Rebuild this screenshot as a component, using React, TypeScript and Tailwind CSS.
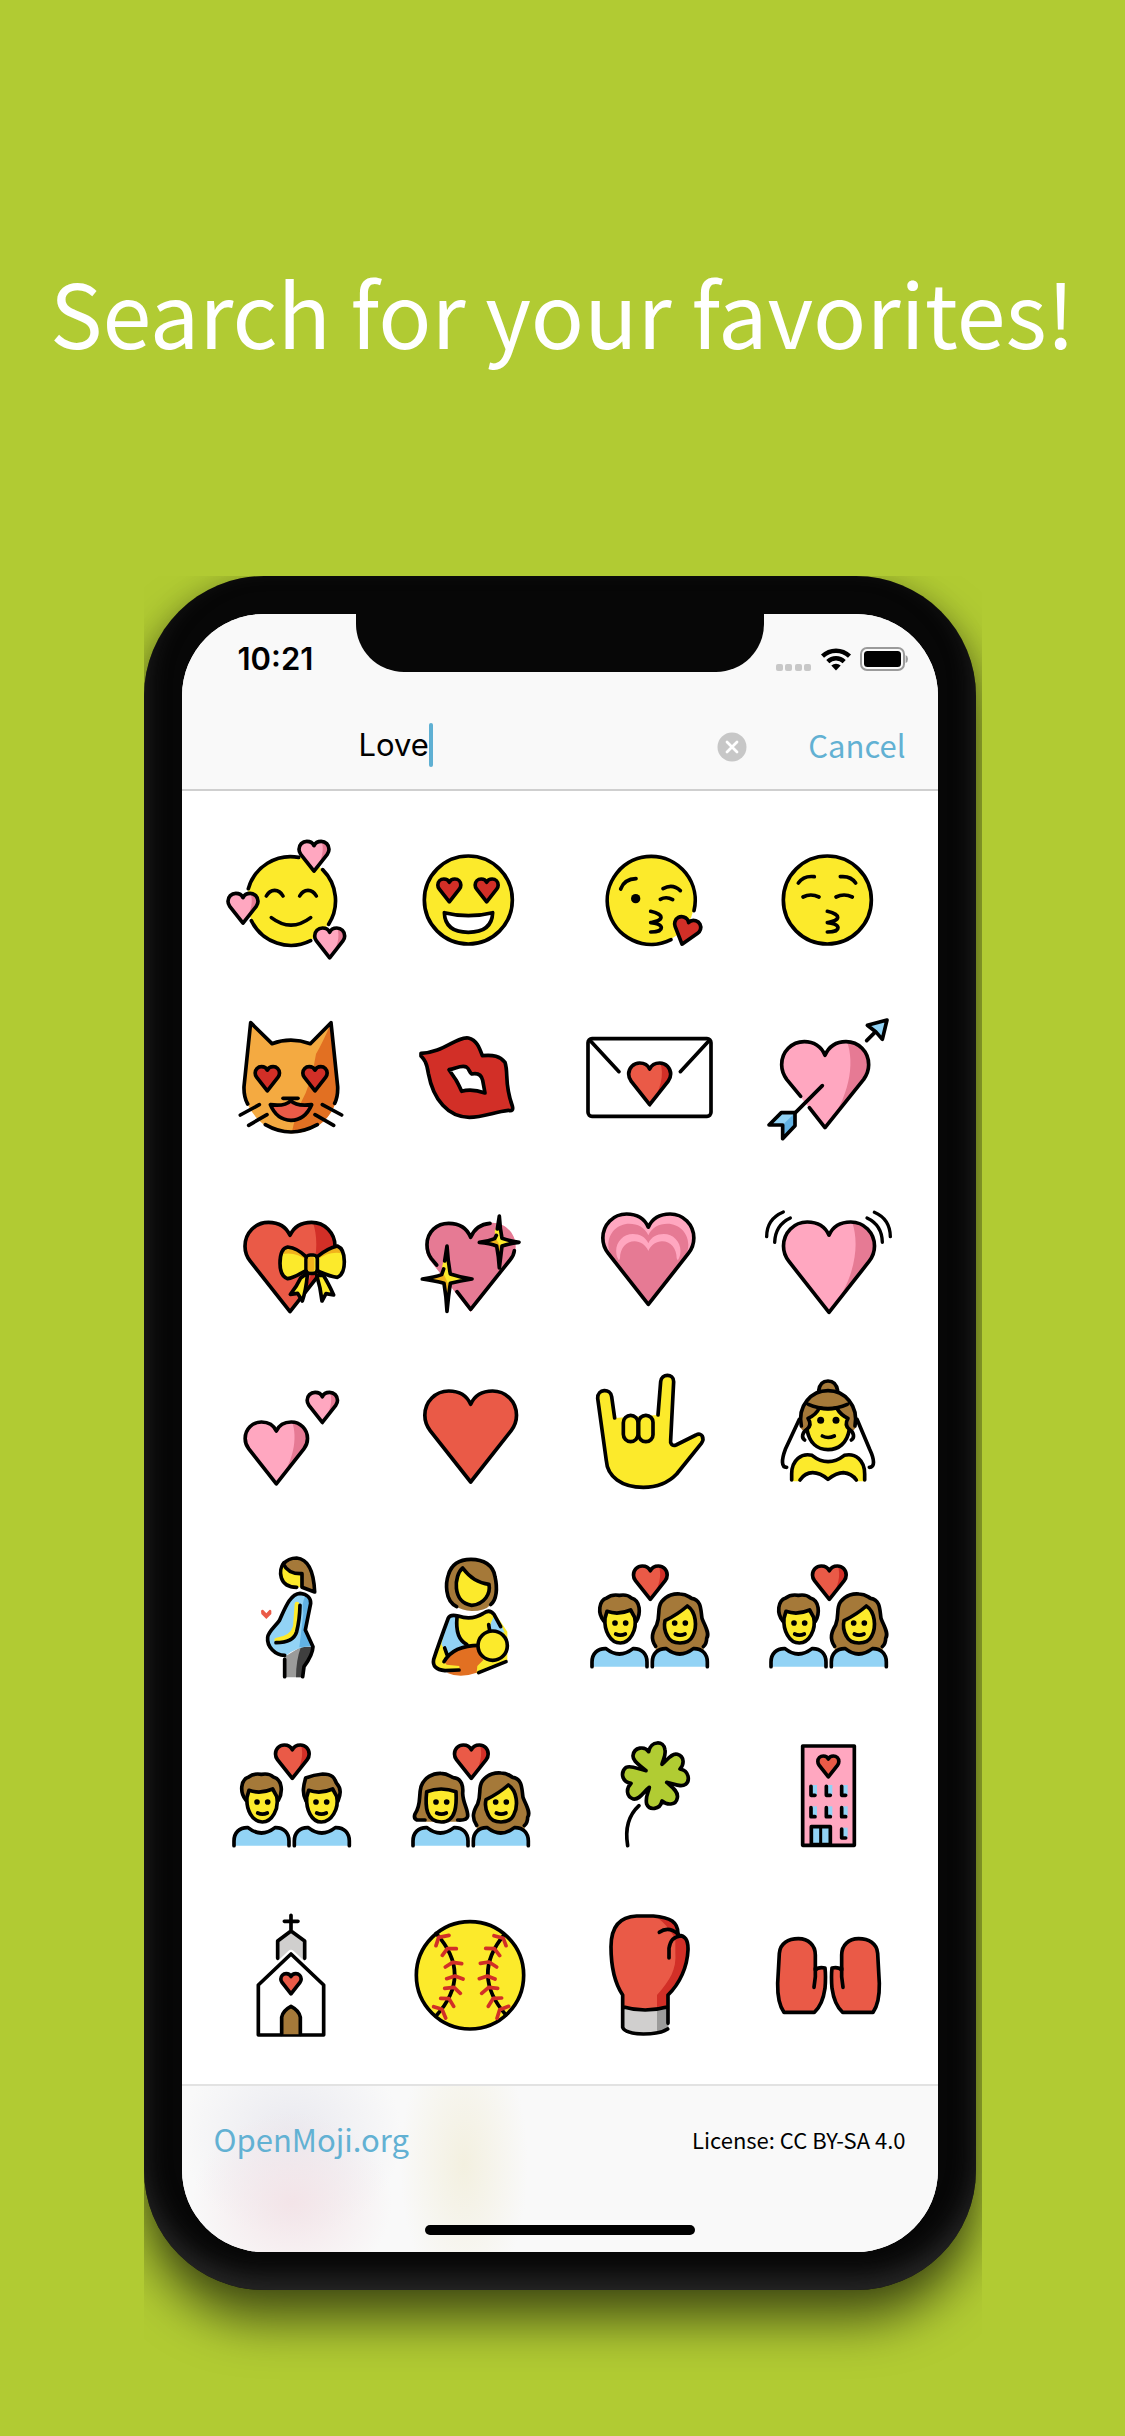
import React, { useState } from "react";

const YELLOW = "#FCEA2B";
const AMBER = "#F1B31C";
const PINK = "#FFA7C0";
const ROSE = "#E67A94";
const RED = "#EA5A47";
const CRIMSON = "#D22F27";
const BROWN = "#A57939";
const SKY = "#92D3F5";
const BLUE = "#61B2E4";
const LIGHT_GREY = "#D0CFCE";
const GREY = "#9B9B9A";
const DARK_GREY = "#3F3F3F";

const LINE = 11;

type HeartProps = {
  cx: number;
  top: number;
  w: number;
  fill: string;
  shade?: string;
  outline?: boolean;
  rotate?: number;
};

/* Heart drawn from its top centre; w is the distance between both outer lobes. */
function Heart({ cx, top, w, fill, shade, outline = true, rotate = 0 }: HeartProps) {
  const s = w / 276;
  return (
    <g transform={`translate(${cx} ${top}) scale(${s}) rotate(${rotate} 0 274)`}>
      <path
        d="M0 40C-12 13-37 0-66 0C-106 0-138 32-138 73C-138 93-132 106-122 119L0 274L122 119C132 106 138 93 138 73C138 32 106 0 66 0C37 0 12 13 0 40Z"
        fill={fill}
        stroke="none"
      />
      {shade && (
        <path
          d="M70 0C95 70 78 180 0 274L122 119C132 106 138 93 138 73C138 32 106 0 70 0Z"
          fill={shade}
          stroke="none"
        />
      )}
      {outline && (
        <path
          d="M0 40C-12 13-37 0-66 0C-106 0-138 32-138 73C-138 93-132 106-122 119L0 274L122 119C132 106 138 93 138 73C138 32 106 0 66 0C37 0 12 13 0 40Z"
          strokeWidth={LINE / s}
        />
      )}
    </g>
  );
}

function SmilingHearts() {
  return (
    <>
      <circle cx="273" cy="272" r="132" fill={YELLOW} stroke="none" />
      <path d="M296 142A132 132 0 0 0 145 236M154 332A132 132 0 0 0 332 392M368 179A132 132 0 0 1 386 343" />
      <path d="M199 258Q208 241 224 241Q240 241 249 258M299 258Q308 241 324 241Q340 241 349 258M214 323Q273 368 332 323" />
      <Heart cx={342} top={94} w={90} fill={PINK} shade={ROSE} />
      <Heart cx={129} top={250} w={90} fill={PINK} shade={ROSE} />
      <Heart cx={389} top={354} w={90} fill={PINK} shade={ROSE} />
    </>
  );
}

function HeartEyes() {
  return (
    <>
      <circle cx="805" cy="270" r="132" fill={YELLOW} />
      <Heart cx={748} top={207} w={69} fill={CRIMSON} />
      <Heart cx={860} top={207} w={69} fill={CRIMSON} />
      <path d="M733 308Q805 326 878 308Q876 367 805 367Q735 367 733 308Z" fill="#fff" />
    </>
  );
}

const KISS_MOUTH = "M272 304C290 308 303 315 303 322C303 332 286 335 272 338C286 339 304 344 304 353C304 362 288 366 272 366";

function KissHeart() {
  return (
    <>
      <circle cx="272" cy="270" r="132" fill={YELLOW} stroke="none" />
      <path d="M402 302A132 132 0 1 0 333 389" />
      <path d="M182 237Q193 207 228 206M309 236Q338 220 361 242M301 268Q319 258 338 269" />
      <circle cx="227" cy="266" r="14" fill="#000" stroke="none" />
      <path d={KISS_MOUTH} />
      <Heart cx={366} top={323} w={80} fill={CRIMSON} rotate={17} />
    </>
  );
}

function KissClosed() {
  return (
    <>
      <circle cx="802" cy="270" r="132" fill={YELLOW} />
      <path d="M715 219Q731 196 763 200M841 200Q873 197 887 219M729 261Q752 249 777 261M828 261Q852 249 877 261" />
      <path d={KISS_MOUTH} transform="translate(530 0)" />
    </>
  );
}

function Cat() {
  return (
    <>
      <path d="M152 638L216 701Q272 680 331 701L393 638L413 830Q414 900 360 943Q320 970 275 970Q230 970 190 943Q132 895 132 830Z" fill="#F4AA41" stroke="none" />
      <path d="M393 638Q372 690 348 732Q335 820 302 880Q285 920 275 970Q320 970 360 943Q414 900 413 830Z" fill="#E27022" stroke="none" />
      <path d="M143 882Q131 860 132 830L152 638L216 701Q272 680 331 701L393 638L413 830Q414 860 404 880M196 944Q272 988 352 944" />
      <Heart cx={202} top={770} w={73} fill={CRIMSON} />
      <Heart cx={345} top={770} w={73} fill={CRIMSON} />
      <path d="M211 884Q255 890 272 872Q290 890 335 884Q315 930 273 931Q230 930 211 884Z" fill={RED} />
      <path d="M249 865H294" />
      <path d="M178 884L121 915M201 914L146 946M367 884L425 915M345 914L401 946" />
    </>
  );
}

function Lips() {
  return (
    <>
      <path d="M663 730C730 728 768 680 805 684C830 690 838 712 847 737C880 734 900 738 915 757C926 790 912 820 937 888Q942 905 925 901C885 905 850 922 808 922C745 922 700 870 685 790C680 755 672 748 663 738Z" fill={CRIMSON} />
      <path d="M747 779C768 775 785 764 799 771C808 776 808 788 815 792C835 788 845 797 848 811L855 849C835 842 805 838 785 844Q775 822 768 810Z" fill="#fff" />
    </>
  );
}

function LoveLetter() {
  return (
    <>
      <rect x="84" y="686" width="369" height="233" rx="12" fill="#fff" />
      <path d="M91 692L177 785M447 692L361 785" />
      <Heart cx={269} top={759} w={126} fill={RED} shade={CRIMSON} />
    </>
  );
}

function ArrowHeart() {
  return (
    <>
      <Heart cx={795} top={695} w={261} fill={PINK} shade={ROSE} outline={false} />
      <path d="M748 893L795 953L911 808C920 795 926 783 926 764C926 725 896 695 858 695C830 695 807 709 795 736C784 709 760 695 733 695C695 695 665 725 665 764C665 783 671 795 680 808L722 859" />
      <path d="M787 827L707 907M920 692L947 665" />
      <path d="M627 945L664 908H705V947L668 986V945Z" fill={SKY} stroke="none" />
      <path d="M668 945L705 908V947L668 986Z" fill={BLUE} stroke="none" />
      <path d="M627 945L664 908H705V947L668 986V945Z" />
      <path d="M922 646L981 630L967 688L947 665Z" fill={SKY} />
    </>
  );
}

function RibbonHeart() {
  return (
    <>
      <Heart cx={270} top={127} w={270} fill={RED} shade={CRIMSON} />
      <path d="M318 282L302 294Q290 320 271 343L293 340L307 363Q318 330 322 286Z" fill={YELLOW} />
      <path d="M350 286Q362 325 366 363L378 341L401 345Q385 310 370 286Z" fill={YELLOW} />
      <path d="M318 230C300 212 280 203 263 201C242 205 240 235 240 250C240 270 245 290 263 296C285 293 300 280 318 272Z" fill={YELLOW} stroke="none" />
      <path d="M352 230C370 215 390 203 412 198C430 205 433 225 433 245C433 270 428 285 412 292C390 290 370 280 352 272Z" fill={YELLOW} stroke="none" />
      <path d="M318 240Q290 215 246 222L263 201Q290 205 318 230ZM352 240Q385 212 428 220L412 198Q380 208 352 230Z" fill={AMBER} stroke="none" />
      <path d="M318 230C300 212 280 203 263 201C242 205 240 235 240 250C240 270 245 290 263 296C285 293 300 280 318 272M352 230C370 215 390 203 412 198C430 205 433 225 433 245C433 270 428 285 412 292C390 290 370 280 352 272" />
      <rect x="318" y="225" width="34" height="55" rx="12" fill={YELLOW} />
      <rect x="323" y="231" width="20" height="43" rx="6" fill={AMBER} stroke="none" />
    </>
  );
}

function SparkleHeart() {
  return (
    <>
      <Heart cx={812} top={128} w={270} fill={ROSE} outline={false} />
      <path d="M710 255L694 236Q681 218 681 194C681 155 711 130 746 130C775 130 800 142 812 172C822 148 843 132 870 130M943 212Q942 226 930 240L812 388L771 335" />
      <path d="M741 198Q744 245 751 282Q780 292 816 297Q780 302 751 310Q745 350 741 394Q739 350 732 310Q705 302 667 297Q705 292 731 282L726 262Z" fill={YELLOW} stroke="none" />
      <path d="M741 394Q739 350 732 310Q705 302 667 297Q705 292 731 282Q740 300 747 320Z" fill={AMBER} stroke="none" />
      <path d="M734 243L741 198Q744 245 751 282Q780 292 816 297Q780 302 751 310Q745 350 741 394Q739 350 732 310Q705 302 667 297Q705 292 725 284L731 267" />
      <path d="M898 108Q900 145 906 175Q930 183 957 187Q930 190 906 198Q902 230 898 264Q896 230 890 198Q870 190 838 187Q865 184 889 176L884 155Z" fill={YELLOW} stroke="none" />
      <path d="M898 238Q896 215 890 198Q870 190 856 187Q875 184 889 178Q896 190 903 205Z" fill={AMBER} stroke="none" />
      <path d="M892 147L898 108Q900 145 906 175Q930 183 957 187Q930 190 906 198Q902 230 898 264Q896 230 890 198Q870 190 838 187Q865 184 884 176L889 166" />
    </>
  );
}

function GrowingHeart() {
  return (
    <>
      <Heart cx={265} top={102} w={272} fill={PINK} outline={false} />
      <Heart cx={265} top={131} w={240} fill={ROSE} outline={false} />
      <Heart cx={265} top={162} w={193} fill={PINK} outline={false} />
      <path d="M265 213C258 195 240 184 224 184C198 184 180 205 180 235L170 254L265 372L360 254L350 235C350 205 332 184 306 184C290 184 272 195 265 213Z" fill={ROSE} stroke="none" />
      <Heart cx={265} top={102} w={273} fill="none" />
    </>
  );
}

function BeatingHeart() {
  return (
    <>
      <Heart cx={807} top={126} w={273} fill={PINK} shade={ROSE} />
      <path d="M670 96Q620 117 620 170M691 114Q646 135 644 187M943 97Q990 117 991 170M921 114Q966 135 967 187" strokeWidth="10" />
    </>
  );
}

function TwoHearts() {
  return (
    <>
      <Heart cx={229} top={726} w={187} fill={PINK} shade={ROSE} />
      <Heart cx={367} top={637} w={91} fill={PINK} shade={ROSE} />
    </>
  );
}

function RedHeart() {
  return <Heart cx={812} top={633} w={275} fill={RED} />;
}

function LoveYouHand() {
  return (
    <>
      <path d="M164 714L155 650C152 625 112 625 113 655L139 842C142 890 185 922 250 922C290 922 325 908 350 882L424 790C435 775 425 755 408 765L348 795C336 800 330 790 332 780L341 605C341 580 304 580 302 605L294 705" fill={YELLOW} />
      <rect x="190" y="706" width="44" height="79" rx="22" fill={YELLOW} />
      <rect x="236" y="706" width="43" height="79" rx="21" fill={YELLOW} />
    </>
  );
}

function Bride() {
  return (
    <>
      <path d="M776 632Q780 603 804 603Q828 603 833 632" fill={BROWN} />
      <path d="M804 632C753 632 718 668 720 742Q735 765 745 740H862Q874 765 888 742C890 668 855 632 804 632Z" fill={BROWN} stroke="none" />
      <path d="M744 715Q768 705 778 684Q804 690 830 684Q842 705 864 715Q852 735 868 748C862 790 835 809 804 809C773 809 748 790 741 748Q757 735 744 715Z" fill={YELLOW} />
      <path d="M724 738C712 675 755 632 804 632C853 632 896 675 885 738M745 673Q804 698 862 673" />
      <path d="M741 748C726 757 724 774 734 780M868 748C883 757 884 774 874 780" />
      <path d="M718 718L676 808C664 840 664 862 680 862M891 718L929 808C944 840 945 862 928 862" />
      <path d="M695 904V882C695 840 725 818 756 826Q804 862 853 826C885 818 914 840 914 882V904H890Q870 878 850 878Q830 878 804 898Q780 878 758 878Q735 878 719 904Z" fill={YELLOW} stroke="none" />
      <path d="M695 900V882C695 840 725 818 756 826Q804 864 853 826C885 818 914 840 914 882V900M720 900Q735 878 758 878Q780 878 804 898Q830 878 850 878Q875 880 889 900" />
      <circle cx="782" cy="721" r="10.5" fill="#000" stroke="none" />
      <circle cx="828" cy="721" r="10.5" fill="#000" stroke="none" />
      <path d="M787 768Q804 777 823 768" />
    </>
  );
}

function Pregnant() {
  return (
    <>
      <path d="M250 100C236 120 236 172 290 172H306V131Q265 133 250 100Z" fill={YELLOW} stroke="none" />
      <path d="M250 102Q265 84 290 84C332 88 342 140 344 186L306 172V131Q265 133 250 102Z" fill={BROWN} />
      <path d="M252 98C234 120 236 172 290 172" />
      <path d="M254 380L303 350H339Q332 380 310 412V442H254Z" fill={GREY} stroke="none" />
      <path d="M303 350H339Q332 380 310 412V442H288Q288 390 303 350Z" fill={DARK_GREY} stroke="none" />
      <path d="M300 190C322 190 332 205 332 220L316 300L339 348Q290 350 256 378C225 375 200 350 203 322C205 305 225 290 238 272C255 235 270 195 300 190Z" fill={SKY} stroke="none" />
      <path d="M316 198Q304 220 310 250L298 352L339 348L316 300L332 220Z" fill={BLUE} stroke="none" />
      <path d="M291 222L286 290Q276 325 230 330" stroke={YELLOW} strokeWidth="14" />
      <path d="M300 226Q299 270 290 305Q280 338 228 338" />
      <path d="M254 376C225 375 200 350 203 322C205 305 225 290 238 272C255 235 270 192 300 190C322 192 333 205 332 220L316 300L339 350Q338 375 312 410L308 440M254 388V440" />
      <path d="M183 242Q188 236 192 242L199 250L206 242Q210 236 214 242V252L199 267L184 252Z" fill={RED} stroke="none" />
    </>
  );
}

function Feeding() {
  return (
    <>
      <path d="M770 230C732 212 738 155 745 135C755 100 780 88 813 88C850 88 880 105 885 140C893 175 890 210 872 224Q855 243 815 243Q785 240 770 230Z" fill={BROWN} stroke="none" />
      <path d="M770 230C732 212 738 155 745 135C755 100 780 88 813 88C850 88 880 105 885 140C893 175 890 210 872 224" />
      <path d="M788 114C762 135 755 218 815 226C855 222 872 190 867 163Q820 158 788 114Z" fill={YELLOW} />
      <path d="M772 256Q748 252 744 264L701 393Q700 422 740 424L835 430L922 393V305L885 250Q872 240 860 250Q815 275 772 256Z" fill={YELLOW} stroke="none" />
      <path d="M772 256Q748 252 744 264L724 343L740 372L800 345Q772 320 772 256Z" fill={SKY} stroke="none" />
      <path d="M882 258Q870 280 868 300L914 308Q905 285 882 258Z" fill={SKY} stroke="none" />
      <path d="M733 397Q765 343 840 350Q840 380 850 390L832 408L830 428Q780 446 740 428L778 420V408L740 404Z" fill="#E27022" stroke="none" />
      <path d="M777 420L735 422Q695 418 701 388Q715 345 745 264Q750 252 775 258Q815 272 850 250Q868 236 882 253L902 290M771 262Q765 325 800 343M732 395Q760 346 838 346M734 354L741 374M866 284L869 302M836 428L918 395" />
      <circle cx="878" cy="347" r="44" fill={YELLOW} />
    </>
  );
}

/* The people below share one frame: left person around x=180, right around x=360. */
function Shoulders({ dx = 0 }: { dx?: number }) {
  return (
    <path
      d="M96 410V396C96 371 112 355 138 356Q178 388 219 356C246 355 261 373 261 396V410"
      transform={`translate(${dx} 0)`}
      fill={SKY}
    />
  );
}

function Features({ dx = 0 }: { dx?: number }) {
  return (
    <g transform={`translate(${dx} 0)`}>
      <circle cx="165" cy="279" r="8.5" fill="#000" stroke="none" />
      <circle cx="197" cy="279" r="8.5" fill="#000" stroke="none" />
      <path d="M167 312Q181 319 196 312" />
    </g>
  );
}

function ShortHairMan() {
  return (
    <>
      <path d="M132 274C112 250 116 212 140 204Q155 192 178 196Q202 192 214 204C242 212 243 250 229 274Z" fill={BROWN} />
      <path d="M141 244Q175 256 212 240L224 262C232 300 210 339 181 339C150 339 132 300 135 265Z" fill={YELLOW} />
      <Features />
      <Shoulders />
    </>
  );
}

function SweptHairMan() {
  return (
    <>
      <path d="M312 276C298 250 306 225 311 207Q335 197 362 195C395 195 398 210 403 222C420 240 415 258 408 276Z" fill={BROWN} />
      <path d="M320 244Q355 256 392 240L404 262C412 300 388 339 358 339C328 339 312 300 314 265Z" fill={YELLOW} />
      <Features dx={177} />
      <Shoulders dx={181} />
    </>
  );
}

function BobHairWoman() {
  return (
    <>
      <path d="M132 333H108Q97 328 102 315C122 285 112 262 120 233C130 205 155 192 180 193C200 193 207 202 217 206C243 208 247 233 245 253C246 283 262 303 260 322Q257 335 230 333V338H132Z" fill={BROWN} stroke="none" />
      <path d="M132 333H108Q97 328 102 315C122 285 112 262 120 233C130 205 155 192 180 193C200 193 207 202 217 206C243 208 247 233 245 253C246 283 262 303 260 322Q257 335 230 333" />
      <path d="M137 248Q180 232 225 248C227 283 227 339 181 339C135 339 132 293 137 248Z" fill={YELLOW} />
      <Features />
      <Shoulders />
    </>
  );
}

function LongHairWoman() {
  return (
    <>
      <path d="M287 349C270 325 278 305 290 285C302 255 290 235 305 215C320 195 345 190 360 192C380 192 385 200 395 205C425 210 422 240 426 265C435 290 450 310 440 325Q440 342 430 350L432 365Q360 395 287 365Z" fill={BROWN} stroke="none" />
      <path d="M287 349C270 325 278 305 290 285C302 255 290 235 305 215C320 195 345 190 360 192C380 192 385 200 395 205C425 210 422 240 426 265C435 290 450 310 440 325Q440 342 430 350" />
      <path d="M382 228C408 245 413 290 398 318C385 346 335 346 322 318C312 300 312 285 315 272Q355 252 382 228Z" fill={YELLOW} />
      <Features dx={179} />
      <Shoulders dx={181} />
    </>
  );
}

function Couple({ left, right }: { left: React.ReactNode; right: React.ReactNode }) {
  return (
    <>
      {left}
      {right}
      <Heart cx={271} top={108} w={101} fill={RED} shade={CRIMSON} />
    </>
  );
}

function Clover() {
  return (
    <>
      <path d="M258 722C240 705 218 695 219 677C222 650 255 648 266 665C272 632 312 630 315 660C318 680 308 690 306 703C322 690 335 668 352 673C375 680 372 705 360 717C388 722 390 752 377 763C362 773 345 762 320 757C335 770 356 785 352 803C348 828 320 825 306 813C300 840 268 842 260 822C255 800 265 790 268 772C250 785 240 810 220 807C198 800 198 775 213 760C183 755 182 725 198 712C215 705 235 718 258 722Z" fill="#B1CC33" />
      <path d="M237 827Q190 870 203 947" />
    </>
  );
}

const HOTEL_WINDOWS = [
  [753, 769], [799, 769], [845, 769],
  [753, 833], [799, 833], [845, 833],
  [845, 897],
];

function Hotel() {
  return (
    <>
      <rect x="728" y="648" width="155" height="298" fill={PINK} />
      <Heart cx={805} top={678} w={63} fill={RED} />
      {HOTEL_WINDOWS.map(([x, y]) => (
        <g key={`${x}-${y}`}>
          <rect x={x + 2} y={y - 4} width="16" height="30" fill={SKY} stroke="none" />
          <path d={`M${x} ${y}v27h12`} />
        </g>
      ))}
      <path d="M754 944V890H811V944Z" fill={SKY} />
      <path d="M782 892V942" strokeWidth="9" />
    </>
  );
}

function Church() {
  return (
    <>
      <path d="M233 248V183L273 153L314 183V248Z" fill={LIGHT_GREY} stroke="none" />
      <path d="M175 315L273 222L371 315V465H175Z" fill="#fff" stroke="#fff" strokeWidth="24" />
      <path d="M233 235V183L273 153L314 183V235M273 106V150M253 124H294" />
      <path d="M175 315L273 222L371 315V465H175Z" />
      <Heart cx={273} top={281} w={61} fill={RED} />
      <path d="M245 463V412Q248 392 273 379Q298 392 301 412V463" fill={BROWN} />
    </>
  );
}

function Softball() {
  return (
    <>
      <circle cx="810" cy="286" r="161" fill={YELLOW} />
      <path d="M708 160Q820 285 708 408M912 165Q812 285 918 405" />
      <path
        stroke={CRIMSON}
        d="M708 197L716 172L747 166M727 226L742 206L769 206M736 261L758 247L785 251M740 296L765 288L789 297M734 325L762 322L781 340M722 355L747 356L761 379M701 380L726 388L737 414M882 167L910 175L918 197M857 205L883 206L899 227M841 250L867 246L890 261M838 296L862 288L885 297M845 340L866 322L893 325M865 379L880 355L905 354M891 415L899 389L926 379"
      />
    </>
  );
}

function BoxingGlove() {
  return (
    <>
      <path d="M188 345C165 310 153 265 153 200C153 140 180 110 230 108H280C330 112 356 125 354 160C375 165 385 180 384 210C382 260 360 310 325 345V382Q255 402 188 382Z" fill={RED} stroke="none" />
      <path d="M284 108C330 112 356 125 354 160C375 165 385 180 384 210C382 260 360 310 325 345V384L291 391V345C330 300 350 270 346 215V175L330 152Q312 125 284 108Z" fill={CRIMSON} stroke="none" />
      <path d="M188 380Q255 402 325 382V447Q250 478 188 442Z" fill={LIGHT_GREY} stroke="none" />
      <path d="M291 391L325 382V447L291 460Z" fill={GREY} stroke="none" />
      <path d="M324 430V345C360 310 382 260 384 210C385 180 375 165 354 166C356 125 330 112 280 108H230C180 110 153 140 153 200C153 265 165 310 188 345V442Q195 460 250 462Q300 462 323 447M188 380Q255 400 324 380" />
      <path d="M298 157Q325 137 354 162M327 234V205Q332 170 362 168" />
    </>
  );
}

function Mitten() {
  return (
    <>
      <path d="M672 397Q652 370 653 310L658 220C660 190 685 176 715 176C745 176 766 195 766 225V270Q775 260 795 264Q798 290 795 325Q788 375 763 397Z" fill={RED} />
      <path d="M766 265V290L762 322" />
    </>
  );
}

function Mittens() {
  return (
    <>
      <Mitten />
      <g transform="translate(1611 0) scale(-1 1)">
        <Mitten />
      </g>
    </>
  );
}

type Emoji = { name: string; x: number; y: number; art: React.ReactNode };

const EMOJIS: Emoji[] = [
  { name: "Smiling face with hearts", x: 6, y: 3, art: <SmilingHearts /> },
  { name: "Smiling face with heart-eyes", x: 543, y: 3, art: <HeartEyes /> },
  { name: "Face blowing a kiss", x: 0, y: 3, art: <KissHeart /> },
  { name: "Kissing face with closed eyes", x: 537, y: 3, art: <KissClosed /> },
  { name: "Smiling cat with heart-eyes", x: 6, y: 540, art: <Cat /> },
  { name: "Kiss mark", x: 543, y: 540, art: <Lips /> },
  { name: "Love letter", x: 0, y: 540, art: <LoveLetter /> },
  { name: "Heart with arrow", x: 537, y: 540, art: <ArrowHeart /> },
  { name: "Heart with ribbon", x: 6, y: -33, art: <RibbonHeart /> },
  { name: "Sparkling heart", x: 543, y: -33, art: <SparkleHeart /> },
  { name: "Growing heart", x: 0, y: -33, art: <GrowingHeart /> },
  { name: "Beating heart", x: 537, y: -33, art: <BeatingHeart /> },
  { name: "Two hearts", x: 6, y: 504, art: <TwoHearts /> },
  { name: "Red heart", x: 543, y: 504, art: <RedHeart /> },
  { name: "Love-you gesture", x: 0, y: 504, art: <LoveYouHand /> },
  { name: "Bride with veil", x: 537, y: 504, art: <Bride /> },
  { name: "Pregnant woman", x: 6, y: -9, art: <Pregnant /> },
  { name: "Breast-feeding", x: 543, y: -9, art: <Feeding /> },
  { name: "Couple with heart", x: 0, y: -9, art: <Couple left={<ShortHairMan />} right={<LongHairWoman />} /> },
  { name: "Couple with heart: woman, man", x: 0, y: -9, art: <Couple left={<ShortHairMan />} right={<LongHairWoman />} /> },
  { name: "Couple with heart: man, man", x: 0, y: -9, art: <Couple left={<ShortHairMan />} right={<SweptHairMan />} /> },
  { name: "Couple with heart: woman, woman", x: 0, y: -9, art: <Couple left={<BobHairWoman />} right={<LongHairWoman />} /> },
  { name: "Four leaf clover", x: 0, y: 528, art: <Clover /> },
  { name: "Love hotel", x: 537, y: 528, art: <Hotel /> },
  { name: "Wedding chapel", x: 6, y: 15, art: <Church /> },
  { name: "Softball", x: 543, y: 15, art: <Softball /> },
  { name: "Boxing glove", x: 0, y: 15, art: <BoxingGlove /> },
  { name: "Gloves", x: 537, y: 15, art: <Mittens /> },
];

function StatusBar() {
  return (
    <div className="flex h-[90px] items-center justify-between pl-14 pr-[30px]">
      <span className="font-['Inter',sans-serif] text-[31px] font-semibold leading-9 text-black">10:21</span>
      <div className="flex items-center gap-2">
        <svg className="mt-4 h-2 w-9" viewBox="0 0 36 8" fill="#c8c8c8" aria-hidden="true">
          <rect x="0" y="1" width="7" height="7" rx="2" />
          <rect x="9" y="1" width="7" height="7" rx="2" />
          <rect x="19" y="1" width="7" height="7" rx="2" />
          <rect x="28" y="1" width="7" height="7" rx="2" />
        </svg>
        <svg className="h-6 w-8" viewBox="0 0 32 24" fill="none" stroke="#000" strokeWidth="4.4" aria-hidden="true">
          <path d="M2.5 9.2A19.5 19.5 0 0 1 29.5 9.2" />
          <path d="M7.8 14.6A11.8 11.8 0 0 1 24.2 14.6" />
          <path d="M16 23.4L11.3 18.6A7 7 0 0 1 20.7 18.6Z" fill="#000" stroke="none" />
        </svg>
        <svg className="h-6 w-12" viewBox="0 0 48 24" aria-hidden="true">
          <rect x="1" y="1" width="43" height="22" rx="6" fill="none" stroke="#9b9b9b" strokeWidth="2" />
          <rect x="4" y="4" width="37" height="16" rx="3.5" fill="#000" />
          <path d="M45.6 8Q48 9 48 12Q48 15 45.6 16Z" fill="#9b9b9b" />
        </svg>
      </div>
    </div>
  );
}

function SearchBar() {
  const [query, setQuery] = useState("Love");
  return (
    <form className="flex h-[85px] items-center pl-[177px] pr-8" role="search" onSubmit={(e) => e.preventDefault()}>
      <div className="flex flex-1 items-center pb-1">
        <input
          aria-label="Search emojis"
          value={query}
          onChange={(e) => setQuery(e.target.value)}
          className="field-sizing-content min-w-0 bg-transparent p-0 font-['Inter',sans-serif] text-[31px] leading-10 text-black outline-none"
        />
        <span className="h-11 w-1 shrink-0 rounded-full bg-[#5fb0d3]" aria-hidden="true" />
      </div>
      <button type="button" aria-label="Clear search" onClick={() => setQuery("")} className="shrink-0">
        <svg className="size-[30px]" viewBox="0 0 30 30" aria-hidden="true">
          <circle cx="15" cy="15" r="14.5" fill="#c7c7c7" />
          <path d="M10 10L20 20M20 10L10 20" stroke="#fff" strokeWidth="2.8" strokeLinecap="round" />
        </svg>
      </button>
      <button type="button" className="ml-[61px] shrink-0 pb-1 text-[31px] leading-10 text-[#62b1d3]">
        Cancel
      </button>
    </form>
  );
}

export default function App() {
  return (
    <main className="min-h-screen overflow-hidden bg-[#b1cb33] pb-10 font-['Noto_Sans_CJK_SC','Noto_Sans',sans-serif]">
      <h1 className="pt-[239px] text-center text-[88px] leading-[144px] text-white">Search for your favorites!</h1>

      <div className="mx-auto mt-[193px] w-[838px] max-w-full overflow-hidden pb-[106px] pr-[6px]">
        <div className="rounded-[120px] bg-[#070707] p-[38px] shadow-[0_30px_50px_rgba(0,0,0,0.6),0_0_24px_rgba(0,0,0,0.15),inset_0_-14px_24px_#262626]">
          <section className="relative overflow-hidden rounded-[82px] bg-white">
            <div className="absolute left-1/2 top-0 h-[58px] w-[408px] -translate-x-1/2 rounded-b-[48px] bg-[#070707]" />

            <header className="border-b-2 border-[#cfcfcf] bg-[#f9f9f9]">
              <StatusBar />
              <SearchBar />
            </header>

            <ul className="grid grid-cols-4 p-5">
              {EMOJIS.map((emoji) => (
                <li key={emoji.name}>
                  <button type="button" aria-label={emoji.name} className="block aspect-square w-full">
                    <svg
                      className="size-full"
                      viewBox={`${emoji.x} ${emoji.y} 537 537`}
                      fill="none"
                      stroke="#000"
                      strokeWidth={LINE}
                      strokeLinecap="round"
                      strokeLinejoin="round"
                      aria-hidden="true"
                    >
                      {emoji.art}
                    </svg>
                  </button>
                </li>
              ))}
            </ul>

            <footer className="border-t-2 border-[#e2e2e2] bg-[#f9f9f9] bg-[radial-gradient(ellipse_100px_90px_at_110px_116px,#f3e4e8,transparent),radial-gradient(ellipse_110px_100px_at_110px_50px,#e9e9ef,transparent),radial-gradient(ellipse_64px_140px_at_282px_78px,#f3f0e0,transparent)]">
              <div className="flex h-[105px] items-center justify-between pl-8 pr-8">
                <a href="https://openmoji.org" className="text-[31px] leading-10 text-[#62b1d3]">
                  OpenMoji.org
                </a>
                <p className="text-[22px] leading-8 text-black">License: CC BY-SA 4.0</p>
              </div>
              <div className="flex h-[61px] items-start justify-center pt-[34px]">
                <div className="h-[10px] w-[270px] rounded-full bg-black" />
              </div>
            </footer>
          </section>
        </div>
      </div>
    </main>
  );
}
